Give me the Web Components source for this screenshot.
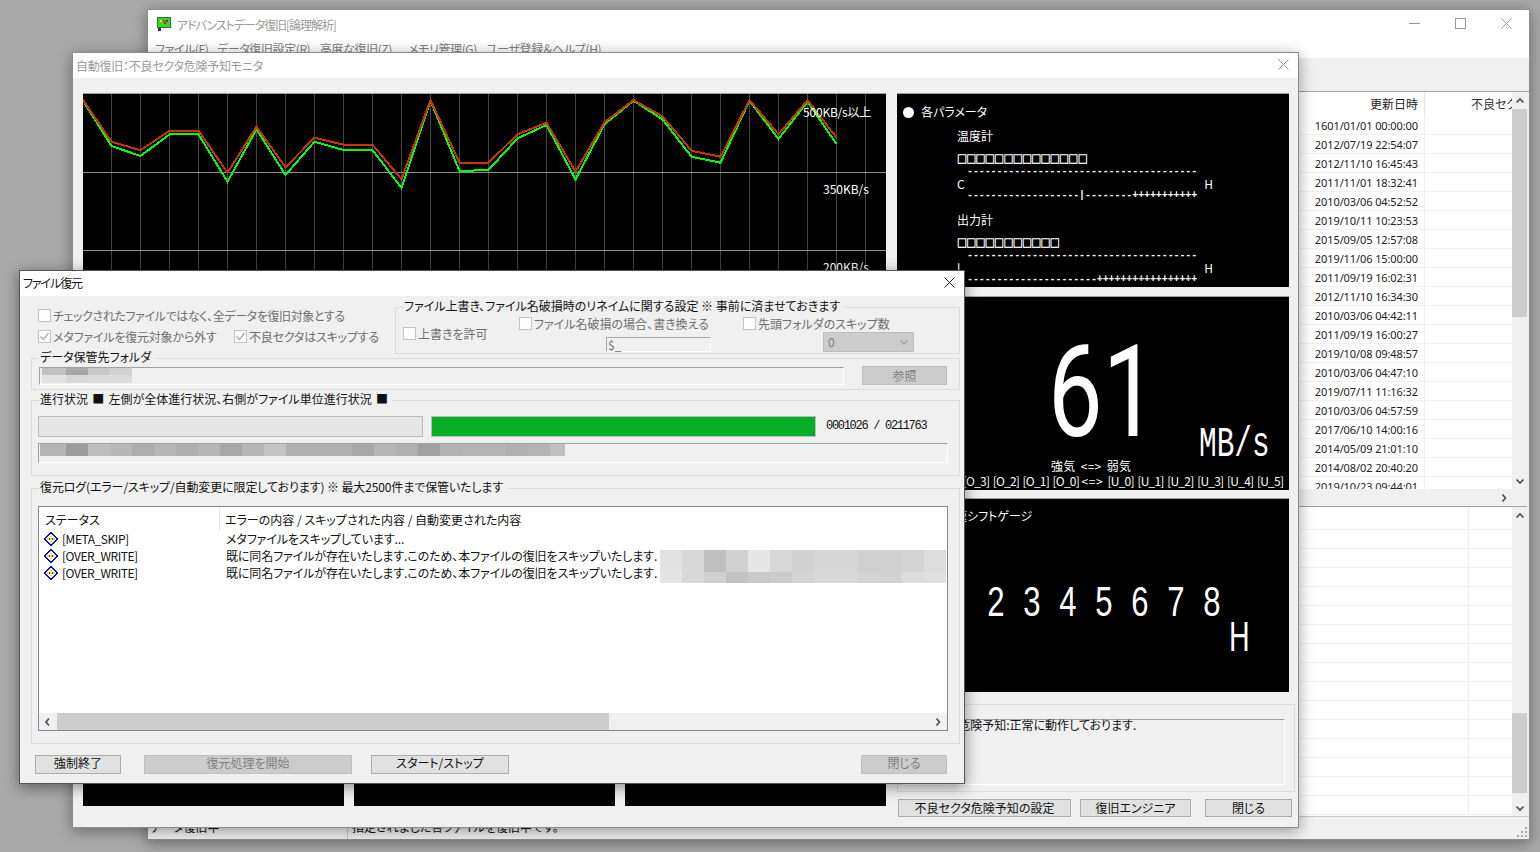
<!DOCTYPE html>
<html lang="ja"><head><meta charset="utf-8"><title>ファイル復元</title>
<style>
html,body{margin:0;padding:0;height:100%;overflow:hidden;background:#a9a9a9}
body{font:12px/14px "Noto Sans CJK JP",sans-serif;font-feature-settings:"palt";color:#111}
</style></head><body>
<x-desktop>
  <x-window style="left:147px;top:9px;width:1383px;height:831px" caption="アドバンストデータ復旧[論理解析]" inactive controls="full" app-icon ls="-1.05" titleh="29"><x-main-content></x-main-content></x-window>
  <x-window style="left:72px;top:52px;width:1227px;height:776px" caption="自動復旧：不良セクタ危険予知モニタ" inactive controls="close" pad="3" ls="-.25" titleh="25"><x-monitor-content></x-monitor-content></x-window>
  <x-window style="left:19px;top:270px;width:946px;height:514px" caption="ファイル復元" controls="close" dark pad="3" ls="-1.1" titleh="25"><x-restore-content></x-restore-content></x-window>
</x-desktop>
<script>
const chev=(d,c='#505050')=>{const p={l:'6,1.5 3,5 6,8.5',r:'3.5,1.5 6.5,5 3.5,8.5',u:'1.5,6.5 5,3 8.5,6.5',d:'1.5,3.5 5,7 8.5,3.5'}[d];return `<svg width="10" height="10" viewBox="0 0 10 10"><polyline points="${p}" fill="none" stroke="${c}" stroke-width="1.7"/></svg>`};
function def(name,css,html){customElements.define(name,class extends HTMLElement{connectedCallback(){if(this.shadowRoot)return;const r=this.attachShadow({mode:'open'});r.innerHTML=`<style>${css}</style>`+(typeof html==='function'?html(this):html)}})}

def('x-desktop',`:host{display:block;position:relative;width:1540px;height:852px;overflow:hidden;background:#a9a9a9}`,`<slot></slot>`);

def('x-window',`
:host{position:absolute;display:flex;flex-direction:column;box-sizing:border-box;background:#fff;border:1px solid #8c8c8c;box-shadow:0 3px 14px rgba(0,0,0,.38)}
:host([dark]){border-color:#555;box-shadow:0 3px 14px rgba(0,0,0,.45)}
.t{display:flex;align-items:center;flex:none;background:#fff;color:#9a9a9a}
:host([dark]) .t{color:#111}
.c{flex:1;white-space:nowrap}
:host([dark]) .c{margin-top:-2px}
.ic{display:flex;margin:0 5px 0 9px}
.b{width:46px;height:100%;display:flex;align-items:center;justify-content:center;margin-top:-2px}
.s{width:30px}
.w{flex:1;min-height:0;display:flex}
::slotted(*){flex:1;min-width:0}
`,h=>{
const col=h.hasAttribute('dark')?'#222':'#999';
const x=`<svg width="11" height="11" viewBox="0 0 11 11"><path d="M.5.5l10 10M10.5.5l-10 10" stroke="${col}" fill="none"/></svg>`;
const ctl=h.getAttribute('controls')==='full'
?`<div class="b"><svg width="11" height="11" viewBox="0 0 11 11"><path d="M0 5.5h11" stroke="${col}"/></svg></div><div class="b"><svg width="11" height="11" viewBox="0 0 11 11"><rect x=".5" y=".5" width="10" height="10" fill="none" stroke="${col}"/></svg></div><div class="b">${x}</div>`
:`<div class="b s">${x}</div>`;
const ic=h.hasAttribute('app-icon')?`<span class="ic"><svg width="15" height="15" viewBox="0 0 15 15"><rect x=".5" y=".5" width="13" height="10" fill="#3fd41e" stroke="#1f7f3a"/><rect x="3" y="3" width="2" height="2" fill="#e8e800"/><rect x="6" y="3" width="2" height="2" fill="#d020a0"/><rect x="9" y="3" width="2" height="2" fill="#2040d0"/><rect x="7" y="5" width="2" height="2" fill="#d02020"/><rect x="1" y="11" width="3" height="3" fill="#333"/></svg></span>`:'';
return `<div class="t" style="height:${h.getAttribute('titleh')}px">${ic}<div class="c" style="padding-left:${h.getAttribute('pad')||0}px;letter-spacing:${h.getAttribute('ls')||0}px">${h.getAttribute('caption')}</div>${ctl}</div><div class="w"><slot></slot></div>`});

def('x-group',`:host{display:block;box-sizing:border-box}
fieldset{margin:0;box-sizing:border-box;height:100%;min-width:0;border:1px solid #dcdcdc;padding:var(--p,0 7px)}
legend{padding:0 4px 2px 1px;line-height:8px;white-space:nowrap;color:#111;word-spacing:var(--ws,0);letter-spacing:var(--ls,0)}`,
h=>`<fieldset><legend>${h.getAttribute('legend')}</legend><slot></slot></fieldset>`);

def('x-check',`:host{display:inline-flex;align-items:center;gap:2px;height:13px;line-height:13px;color:#6f6f6f;white-space:nowrap}
.b{width:13px;height:13px;box-sizing:border-box;background:#fdfdfd;border:1px solid #c4c4c4;flex:none;display:flex}`,
h=>`<span class="b">${h.hasAttribute('checked')?'<svg width="11" height="11" viewBox="0 0 11 11"><path d="M1.5 5.5l3 3 5-6.5" fill="none" stroke="#aaa" stroke-width="1.3"/></svg>':''}</span><span><slot></slot></span>`);

def('x-btn',`:host{display:flex;align-items:center;justify-content:center;box-sizing:border-box;height:19px;background:#e1e1e1;border:1px solid #adadad;white-space:nowrap;color:#111}
:host([disabled]){background:#cccccc;border-color:#bfbfbf;color:#808080}`,`<slot></slot>`);

def('x-mosaic',`:host{display:block}.r{display:flex}.r i{display:block;flex:none}`,h=>{
const cw=+(h.getAttribute('cell')||22);
return h.getAttribute('data').split(';').map(r=>{const [ht,cs]=r.split(':');return `<div class="r" style="height:${ht}px">`+cs.split(',').map(c=>{const [col,w]=c.split('*');return `<i style="width:${w||cw}px;background:#${col}${col}${col}"></i>`}).join('')+'</div>'}).join('')});

def('x-vscroll',`:host{display:flex;flex-direction:column;width:15px;flex:none;background:#f0f0f0}
.a{height:17px;flex:none;display:flex;align-items:center;justify-content:center}
.th{background:#cdcdcd;flex:none}.f{flex:1}`,
h=>`<div class="a">${chev('u')}</div><div style="height:${h.getAttribute('before')}px;flex:none"></div><div class="th" style="height:${h.getAttribute('size')}px"></div><div class="f"></div><div class="a">${chev('d')}</div>`);

def('x-hscroll',`:host{display:flex;height:17px;flex:none;background:#f0f0f0;align-items:stretch}
.a{width:18px;flex:none;display:flex;align-items:center;justify-content:center}
.th{background:#cdcdcd;flex:none}.f{flex:1}`,
h=>`<div class="a">${chev('l')}</div><div class="th" style="width:${h.getAttribute('size')}px"></div><div class="f"></div><div class="a">${chev('r')}</div>`);

def('x-status-icon',`:host{display:block;width:14px;height:14px;flex:none}svg{display:block}`,
`<svg width="14" height="14" viewBox="0 0 14 14" shape-rendering="crispEdges"><polygon points="7,.5 13.5,7 7,13.5 .5,7" fill="#fff" stroke="#0a0ae0" stroke-width="1.1"/><g fill="#f4e400"><rect x="3" y="6" width="2" height="2"/><rect x="6" y="6" width="2" height="2"/><rect x="9" y="6" width="2" height="2"/><rect x="6" y="4" width="2" height="1"/><rect x="6" y="9" width="2" height="1"/></g><g fill="#3a3ad0"><rect x="5" y="6" width="1" height="2"/><rect x="8" y="6" width="1" height="2"/></g></svg>`);

def('x-log',`:host{display:flex;flex-direction:column;box-sizing:border-box;background:#fff;border:1px solid #828790}
.h{display:grid;grid-template-columns:181px 1fr;height:23px;flex:none}
.h div{display:flex;align-items:center;white-space:nowrap;padding-top:2px;box-sizing:border-box}
.h div:first-child{padding-left:6px;border-right:1px solid #e5e5e5}
.h div:last-child{padding-left:5px}
.b{flex:1;position:relative;min-height:0}
.r{display:grid;grid-template-columns:181px 1fr;height:17px;align-items:center;white-space:nowrap}
.r>div:first-child{display:flex;gap:4px;padding-left:5px;align-items:center;letter-spacing:-.45px}
.r>div:last-child{padding-left:6px;letter-spacing:-.1px}
x-mosaic{position:absolute;left:621px;top:20px}
`,()=>{
const row=(a,b)=>`<div class="r"><div><x-status-icon></x-status-icon><span>${a}</span></div><div>${b}</div></div>`;
const m='既に同名ファイルが存在いたします.このため、本ファイルの復旧をスキップいたします.';
return `<div class="h"><div>ステータス</div><div>エラーの内容 / スキップされた内容 / 自動変更された内容</div></div>
<div class="b">${row('[META_SKIP]','メタファイルをスキップしています...')}${row('[OVER_WRITE]',m)}${row('[OVER_WRITE]',m)}
<x-mosaic data="22:e2,d9,c0,d0,e6,d8,d2,d6,d6,d0,d0,d4,dc;11:e4,d8,d0,c2,c8,cc,d4,d8,d8,d4,d2,dc,e0"></x-mosaic></div>
<x-hscroll size="552"></x-hscroll>`});

def('x-restore-content',`
:host{display:flex;flex-direction:column;background:#f0f0f0;padding:0 4px 0 11px;box-sizing:border-box;min-height:0}
.top{display:grid;grid-template-columns:364px 565px;margin-top:6px;height:52px;flex:none}
.left{display:flex;flex-direction:column;gap:8px;padding:7px 0 0 7px}
.left>div{display:flex;height:13px}
.l1{letter-spacing:-.38px}
.l2{display:grid!important;grid-template-columns:196px auto;letter-spacing:-.2px}
.ow{display:grid;grid-template-columns:116px 224px auto}
.ow>div{display:flex;flex-direction:column;align-items:flex-start}
.ow .a{padding-top:15px}.ow .b,.ow .c{padding-top:5px}
.txt{margin:7px 0 0 87px;width:105px;height:15px;box-sizing:border-box;border:1px solid #fff;border-top-color:#a8a8a8;border-left-color:#a8a8a8;color:#6f6f6f;line-height:13px;padding-left:1px}
.sel{margin:2px 0 0 80px;width:91px;height:20px;box-sizing:border-box;background:#cccccc;border:1px solid #bcbcbc;color:#808080;display:flex;align-items:center;justify-content:space-between;padding:0 4px}
.g2{height:37px;margin-top:-1px;flex:none}
.g2i{display:flex;gap:18px;padding-top:3px}
.fld{box-sizing:border-box;border:1px solid #fff;border-top-color:#a0a0a0;border-left-color:#a0a0a0}
.path{width:805px;height:18px;margin-top:1px;padding-left:2px}
.g3{height:81px;margin-top:5px;flex:none;--ws:1.6px}
.pr{display:flex;margin:11px 0 0 -1px;align-items:center}
.bar{width:385px;height:21px;box-sizing:border-box;border:1px solid #bcbcbc;background:#e6e6e6}
.bar.on{background:#06ae26;margin-left:8px}
.cnt{margin:-2px 0 0 10px;letter-spacing:-1.3px;font:12px/14px "Liberation Mono",monospace;color:#111;font-feature-settings:normal;white-space:nowrap}
.file{width:910px;height:20px;margin:6px 0 0 -1px;padding-left:1px}
.g4{height:261px;margin-top:7px;flex:none;--ls:-.12px}
x-log{width:910px;height:225px;margin:13px 0 0 -1px}
.btns{display:flex;margin:11px 13px 0 4px}
.btns x-btn{padding-bottom:3px}
`,`<div class="top"><div class="left">
<div class="l1"><x-check>チェックされたファイルではなく、全データを復旧対象とする</x-check></div>
<div class="l2"><div><x-check checked>メタファイルを復元対象から外す</x-check></div><div><x-check checked>不良セクタはスキップする</x-check></div></div></div>
<x-group legend="ファイル上書き、ファイル名破損時のリネイムに関する設定 ※ 事前に済ませておきます"><div class="ow">
<div class="a"><x-check>上書きを許可</x-check></div>
<div class="b"><x-check>ファイル名破損の場合、書き換える</x-check><div class="txt">$_</div></div>
<div class="c"><x-check>先頭フォルダのスキップ数</x-check><div class="sel"><span>0</span>${chev('d','#aaa')}</div></div>
</div></x-group></div>
<x-group class="g2" legend="データ保管先フォルダ"><div class="g2i"><div class="fld path"><x-mosaic data="7:c2*24,a8,c8,d2;8:e2*24,d8,dc,dc"></x-mosaic></div><x-btn disabled style="width:85px">参照</x-btn></div></x-group>
<x-group class="g3" legend="進行状況 ■ 左側が全体進行状況、右側がファイル単位進行状況 ■">
<div class="pr"><div class="bar"></div><div class="bar on"></div><div class="cnt">0001026 / 0211763</div></div>
<div class="fld file"><x-mosaic data="12:b4*26,9c,bd,b8,ad,b6,af,b6,a8,b6,c4,b0,b0,b0,a9,b6,b0,a0,b2,b4,b4,b0,b4,bf*15"></x-mosaic></div></x-group>
<x-group class="g4" legend="復元ログ(エラー/スキップ/自動変更に限定しております) ※ 最大2500件まで保管いたします"><x-log></x-log></x-group>
<div class="btns"><x-btn style="width:86px">強制終了</x-btn><x-btn disabled style="width:208px;margin-left:23px">復元処理を開始</x-btn><x-btn style="width:138px;margin-left:19px">スタート/ストップ</x-btn><x-btn disabled style="width:86px;margin-left:auto">閉じる</x-btn></div>`);

def('x-chart',`:host{display:block;position:relative;background:#000;border-top:1px solid #a0a0a0;overflow:hidden}
svg{display:block}
.l{position:absolute;color:#fff;white-space:nowrap;line-height:14px}`,()=>{
const R=[99.3,141.7,150.3,130.7,130.7,172.7,126.7,167.3,137.7,144.7,144.7,179.3,100,162.7,162.7,134.3,122.7,171.7,122.3,100,116.3,150.7,156.7,100,134.3,100,137.7];
const G=[100,146,156,134.3,134.3,181.7,129.3,175,141.7,150,150,188,100.7,171,170,138.3,125,179.3,124.3,100.7,119.3,156.7,162.7,100.7,139,101.7,144];
const pts=a=>a.map((y,i)=>`${-.5+29*i},${(y-94).toFixed(1)}`).join(' ');
let g='';for(let i=1;i<28;i++){const x=-.5+29*i;g+=`<path d="M${x} 0V420" stroke="#444"/>`}
for(const y of [78.5,156.5,234.5,312.5])g+=`<path d="M0 ${y}H803" stroke="#8c8c8c"/>`;
return `<svg width="803" height="420" shape-rendering="crispEdges">${g}<polyline points="${pts(G)}" fill="none" stroke="#00ff00" stroke-width="2"/><polyline points="${pts(R)}" fill="none" stroke="#cc3300" stroke-width="2"/></svg>
<div class="l" style="left:720px;top:11px;letter-spacing:-.2px">500KB/s以上</div><div class="l" style="left:740px;top:88px">350KB/s</div><div class="l" style="left:740px;top:166px">200KB/s</div>`});

def('x-panel',`:host{display:block;background:#000;color:#fff;border-top:1px solid #a0a0a0;overflow:hidden;box-sizing:border-box}`,`<slot></slot>`);

def('x-param-panel',`:host{display:block;color:#fff;height:193px}
.g{display:grid;padding-top:11px;grid-template-rows:14px 34px 12px 12px 14px 8px 42px 4px 20px 6px 15px;padding-left:60px;width:256px}
.g>div{display:flex;align-items:center;white-space:nowrap;height:100%;min-height:0;box-sizing:border-box}
.p{margin-left:-54px;gap:7px}
.dot{width:11px;height:11px;border-radius:50%;background:#fff;flex:none}
.sq{font:10px/12px "Noto Sans CJK JP",sans-serif;font-weight:700;letter-spacing:-.72px;font-feature-settings:normal;-webkit-text-stroke:.35px #fff}
.m{font:10px/12px "Liberation Mono",monospace;font-weight:700;letter-spacing:-.1px;padding:2px 0 0 10px;font-feature-settings:normal}
.e{justify-content:space-between}
`,`<div class="g"><div class="p"><span class="dot"></span><span>各パラメータ</span></div><div>温度計</div><div class="sq">□□□□□□□□□□□□□□</div>
<div class="m">---------------------------------------</div><div class="e"><span>C</span><span>H</span></div>
<div class="m">-------------------|--------+++++++++++</div><div>出力計</div><div class="sq">□□□□□□□□□□□</div>
<div class="m">---------------------------------------</div><div class="e"><span>l</span><span>H</span></div>
<div class="m">----------------------+++++++++++++++++</div></div>`);

def('x-speed-panel',`:host{display:block;color:#fff;height:193px;overflow:hidden}
.top{display:flex;align-items:flex-start;padding:31px 0 0 151px;height:97px}
.big{font:128px/128px Roboto,"Liberation Sans",sans-serif;width:151px;flex:none;transform:scaleX(.76);transform-origin:0 0;white-space:nowrap;font-feature-settings:normal}
.u{font:42px/42px "Liberation Mono",monospace;margin-top:96px;transform:scaleX(.7);transform-origin:0 0;white-space:nowrap;font-feature-settings:normal}
.a{padding-left:154px;margin-top:34px;white-space:nowrap;word-spacing:2.5px;letter-spacing:.2px}
.b{display:flex;justify-content:flex-end;padding-right:6px;margin-top:1px;white-space:nowrap;letter-spacing:-.8px}
.b span{width:29.9px;flex:none;text-align:left}
`,`<div class="top"><div class="big">61</div><div class="u">MB/s</div></div>
<div class="a">強気 &lt;=&gt; 弱気</div>
<div class="b"><span>[O_3]</span><span>[O_2]</span><span style="width:30px">[O_1]</span><span style="width:29px">[O_0]</span><span style="width:26px;letter-spacing:.6px">&lt;=&gt;</span><span>[U_0]</span><span>[U_1]</span><span>[U_2]</span><span>[U_3]</span><span>[U_4]</span><span style="width:26px">[U_5]</span></div>`);

def('x-gear-panel',`:host{display:block;color:#fff;height:193px;overflow:hidden}
.t{padding:10px 0 0 46px;white-space:nowrap;height:14px}
.d{display:flex;padding-left:81px;margin-top:58px;font:42px/42px "Liberation Sans",sans-serif;height:42px;font-feature-settings:normal}
.d span{width:36px;text-align:center;transform:scaleX(.74);flex:none}
.h{padding-left:332px;margin-top:-7px;font:42px/42px "Liberation Sans",sans-serif;font-feature-settings:normal}
.h span{display:inline-block;transform:scaleX(.68);transform-origin:0 0}
`,`<div class="t">変速シフトゲージ</div><div class="d"><span>2</span><span>3</span><span>4</span><span>5</span><span>6</span><span>7</span><span>8</span></div><div class="h"><span>H</span></div>`);

def('x-monitor-content',`:host{display:grid;grid-template-columns:803px 398px;column-gap:11px;background:#f0f0f0;padding:15px 0 0 10px;box-sizing:border-box;min-height:0;align-content:start}
.lft{display:flex;flex-direction:column;gap:10px;height:713px}
x-chart{height:421px;flex:none}
.three{flex:1;display:grid;grid-template-columns:261px 261px 261px;column-gap:10px}
.three div{background:#000}
.rgt{display:flex;flex-direction:column}
x-panel{width:392px;height:194px;flex:none}
.g{height:88px;margin-top:12px;box-sizing:border-box;border:1px solid #dcdcdc;padding:14px 9px 7px 3px;flex:none}
.f{box-sizing:border-box;height:66px;border:1px solid #fff;border-top-color:#a0a0a0;border-left-color:#a0a0a0;white-space:nowrap;color:#111;line-height:10px}
.bs{display:flex;margin:7px 0 0 1px}
`,`<div class="lft"><x-chart></x-chart><div class="three"><div></div><div></div><div></div></div></div>
<div class="rgt"><x-panel><x-param-panel></x-param-panel></x-panel>
<x-panel style="margin-top:9px"><x-speed-panel></x-speed-panel></x-panel>
<x-panel style="margin-top:8px"><x-gear-panel></x-gear-panel></x-panel>
<div class="g"><div class="f">不良セクタ危険予知:正常に動作しております.</div></div>
<div class="bs"><x-btn style="width:173px;height:18px">不良セクタ危険予知の設定</x-btn><x-btn style="width:111px;height:18px;margin-left:9px">復旧エンジニア</x-btn><x-btn style="width:87px;height:18px;margin-left:14px">閉じる</x-btn></div></div>`);

def('x-main-content',`:host{display:flex;flex-direction:column;min-height:0;background:#f0f0f0;color:#222}
.menu{height:19px;flex:none;background:#fff;display:grid;grid-template-columns:62px 103px 88px 78px auto;padding-left:7px;align-items:center;color:#808080;white-space:nowrap;line-height:19px}
.menu span{letter-spacing:-.4px}
.tool{height:33px;flex:none;background:#f0f0f0;border-bottom:1px solid #a0a0a0}
.up{height:397px;flex:none;display:flex;background:#fff;overflow:hidden}
.lst{flex:1;min-width:0;overflow:hidden}
.hd{display:flex;justify-content:flex-end;height:24px;align-items:center;white-space:nowrap}
.hd .d{width:100%;height:100%;display:flex;align-items:center;justify-content:flex-end;padding-right:6px;border-right:1px solid #e5e5e5;box-sizing:border-box}
.hd .o{width:87px;flex:none;overflow:hidden;height:100%;display:flex;align-items:center;padding-left:46px;box-sizing:border-box;color:#333}
.r{display:flex;height:19px;box-sizing:border-box;border-bottom:1px solid #f0f0f0;align-items:center}
.r .d{width:100%;height:100%;display:flex;align-items:center;justify-content:flex-end;padding:1px 6px 0 0;border-right:1px solid #f0f0f0;box-sizing:border-box;font:11px/14px "Noto Sans",sans-serif;letter-spacing:-.1px;font-feature-settings:normal;color:#222}
.r .o{width:87px;flex:none}
.hb{display:flex;justify-content:flex-end;height:17px;flex:none;align-items:center;padding-right:15px}
.hb span{width:17px;display:flex;justify-content:center}
.div{height:1px;background:#a0a0a0;flex:none}
.lo{height:309px;flex:none;display:flex;background:#fff;overflow:hidden}
.lh{height:23px;border-bottom:1px solid #f0f0f0}
.lr{height:19px;border-bottom:1px solid #f0f0f0}
.lh,.lr{padding-right:43px;box-sizing:border-box}
.lh i,.lr i{display:block;height:100%;border-right:1px solid #ececec}
.st{flex:1;display:flex;border-top:1px solid #c8c8c8;background:#f0f0f0;padding-top:3px;white-space:nowrap;position:relative;min-height:0;color:#111}
.st div:first-child{width:200px;border-right:1px solid #c8c8c8;padding-left:2px;box-sizing:border-box}
.st div:nth-child(2){padding-left:4px;flex:1}
.gr{position:absolute;right:1px;bottom:1px;display:block}
.sb{padding-right:2px;display:flex;flex-direction:column;flex:none;height:724px}
`,()=>{
const ds=['1601/01/01 00:00:00','2012/07/19 22:54:07','2012/11/10 16:45:43','2011/11/01 18:32:41','2010/03/06 04:52:52','2019/10/11 10:23:53','2015/09/05 12:57:08','2019/11/06 15:00:00','2011/09/19 16:02:31','2012/11/10 16:34:30','2010/03/06 04:42:11','2011/09/19 16:00:27','2019/10/08 09:48:57','2010/03/06 04:47:10','2019/07/11 11:16:32','2010/03/06 04:57:59','2017/06/10 14:00:16','2014/05/09 21:01:10','2014/08/02 20:40:20','2019/10/23 09:44:01'];
return `<div class="menu"><span>ファイル(F)</span><span>データ復旧設定(R)</span><span>高度な復旧(Z)</span><span>メモリ管理(G)</span><span>ユーザ登録＆ヘルプ(H)</span></div>
<div class="tool"></div>
<div class="sb">
<div class="up"><div class="lst"><div class="hd"><div class="d">更新日時</div><div class="o">不良セクタ</div></div>${ds.map(d=>`<div class="r"><div class="d">${d}</div><div class="o"></div></div>`).join('')}</div><x-vscroll before="0" size="208"></x-vscroll></div>
<div class="hb"><span>${chev('r')}</span></div>
<div class="div"></div>
<div class="lo"><div class="lst"><div class="lh"><i></i></div>${Array(15).fill('<div class="lr"><i></i></div>').join('')}</div><x-vscroll before="189" size="80"></x-vscroll></div>
</div>
<div class="st"><div>データ復旧中</div><div>指定されました各ファイルを復旧中です。</div><svg class="gr" width="11" height="11" viewBox="0 0 11 11" fill="#a8a8a8"><rect x="8" y="0" width="2" height="2"/><rect x="4" y="4" width="2" height="2"/><rect x="8" y="4" width="2" height="2"/><rect x="0" y="8" width="2" height="2"/><rect x="4" y="8" width="2" height="2"/><rect x="8" y="8" width="2" height="2"/></svg></div>`});
</script>
</body></html>
